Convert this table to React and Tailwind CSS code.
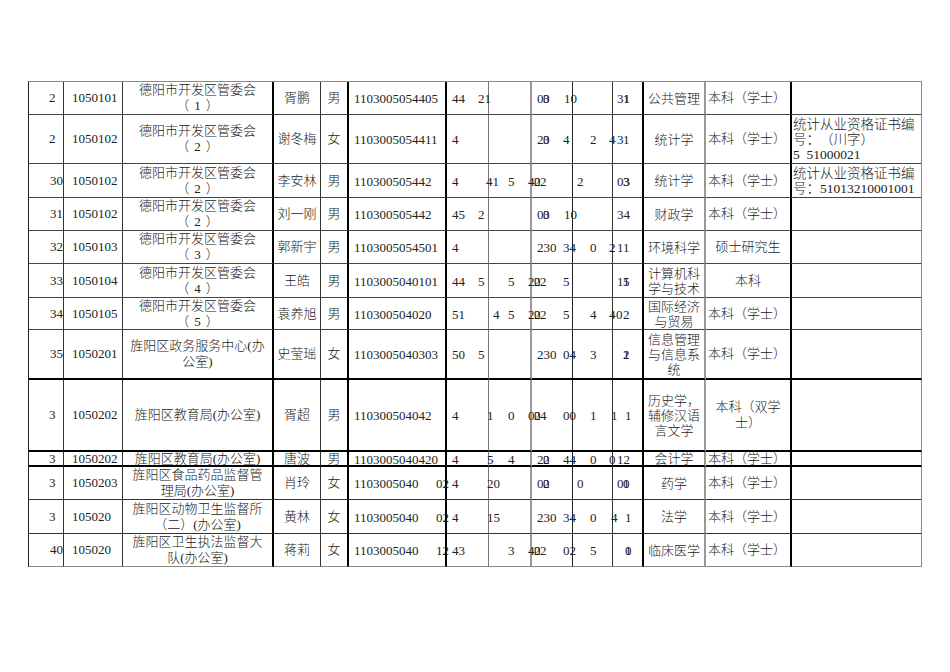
import React from 'react';

const COLS = [36, 59, 151, 47, 28, 98, 42, 43, 41, 40, 31, 62, 86, 130];
const STARTS = COLS.reduce((acc, w) => [...acc, acc[acc.length - 1] + w], [28]);

// right border of every column
const COL_BORDER = [
  'border-r border-r-[#333]',
  'border-r border-r-[#333]',
  'border-r-2 border-r-black',
  'border-r border-r-[#333]',
  'border-r-2 border-r-black',
  'border-r-2 border-r-black',
  'border-r border-r-[#777]',
  'border-r-2 border-r-[#999]',
  'border-r border-r-[#222]',
  'border-r border-r-[#333]',
  'border-r-2 border-r-black',
  'border-r-2 border-r-[#999]',
  'border-r-2 border-r-black',
  'border-r border-r-[#888]',
];

// bottom border of every row
const ROW_BORDER = [
  'border-b border-b-[#444]',
  'border-b border-b-[#444]',
  'border-b border-b-[#444]',
  'border-b border-b-[#444]',
  'border-b border-b-[#444]',
  'border-b border-b-[#444]',
  'border-b border-b-[#444]',
  'border-b-2 border-b-black',
  'border-b-2 border-b-black',
  'border-b-2 border-b-black',
  'border-b border-b-[#333]',
  'border-b border-b-[#333]',
  'border-b border-b-[#888]',
];

const rows = [
  {
    no: '2', code: '1050101', unit: ['德阳市开发区管委会', '（1）'], name: '胥鹏', sex: '男',
    nums: [[354, '1103005054405'], [452, '44'], [478, '21'], [537, '0'], [543, '0'], [543, '3'], [564, '10'], [617, '3'], [623, '1'], [623.6, '1']],
    major: ['公共管理'], degree: ['本科（学士）'], degLeft: true, note: [],
  },
  {
    no: '2', code: '1050102', unit: ['德阳市开发区管委会', '（2）'], name: '谢冬梅', sex: '女',
    nums: [[354, '1103005054411'], [452, '4'], [537, '2'], [543, '0'], [543, '3'], [563, '4'], [590, '2'], [609, '4'], [617, '3'], [623, '1']],
    major: ['统计学'], degree: ['本科（学士）'], degLeft: true,
    note: ['统计从业资格证书编', '号：（川字）', '5  51000021'],
  },
  {
    no: '30', code: '1050102', unit: ['德阳市开发区管委会', '（2）'], name: '李安林', sex: '男',
    nums: [[354, '110300505442'], [452, '4'], [486, '41'], [508, '5'], [528, '4'], [534, '0'], [534, '2'], [540, '2'], [577, '2'], [617, '0'], [623, '3'], [623.6, '3']],
    major: ['统计学'], degree: ['本科（学士）'], degLeft: true,
    note: ['统计从业资格证书编', '号：51013210001001'],
  },
  {
    no: '31', code: '1050102', unit: ['德阳市开发区管委会', '（2）'], name: '刘一刚', sex: '男',
    nums: [[354, '110300505442'], [452, '45'], [478, '2'], [537, '0'], [543, '0'], [543, '3'], [564, '10'], [617, '34']],
    major: ['财政学'], degree: ['本科（学士）'], degLeft: true, note: [],
  },
  {
    no: '32', code: '1050103', unit: ['德阳市开发区管委会', '（3）'], name: '郭新宇', sex: '男',
    nums: [[354, '1103005054501'], [452, '4'], [537, '230'], [563, '34'], [590, '0'], [609, '2'], [617, '1'], [623, '1']],
    major: ['环境科学'], degree: ['硕士研究生'], degLeft: false, note: [],
  },
  {
    no: '33', code: '1050104', unit: ['德阳市开发区管委会', '（4）'], name: '王皓', sex: '男',
    nums: [[354, '1103005040101'], [452, '44'], [478, '5'], [508, '5'], [528, '2'], [534, '0'], [534, '2'], [540, '2'], [563, '5'], [617, '1'], [623, '5'], [623, '1']],
    major: ['计算机科', '学与技术'], degree: ['本科'], degLeft: false, note: [],
  },
  {
    no: '34', code: '1050105', unit: ['德阳市开发区管委会', '（5）'], name: '袁养旭', sex: '男',
    nums: [[354, '110300504020'], [452, '51'], [493, '4'], [508, '5'], [528, '2'], [534, '0'], [534, '2'], [540, '2'], [563, '5'], [590, '4'], [609, '4'], [616, '0'], [623, '2']],
    major: ['国际经济', '与贸易'], degree: ['本科（学士）'], degLeft: true, note: [],
  },
  {
    no: '35', code: '1050201', unit: ['旌阳区政务服务中心(办', '公室)'], name: '史莹瑶', sex: '女',
    nums: [[354, '1103005040303'], [452, '50'], [478, '5'], [537, '230'], [563, '04'], [590, '3'], [623, '2'], [623, '1']],
    major: ['信息管理', '与信息系', '统'], degree: ['本科（学士）'], degLeft: true, note: [],
  },
  {
    no: '3', code: '1050202', unit: ['旌阳区教育局(办公室)'], name: '胥超', sex: '男',
    nums: [[354, '110300504042'], [452, '4'], [487, '1'], [508, '0'], [528, '0'], [534, '0'], [534, '2'], [540, '4'], [563, '00'], [590, '1'], [611, '1'], [625, '1']],
    major: ['历史学，', '辅修汉语', '言文学'], degree: ['本科（双学', '士）'], degLeft: false, note: [],
  },
  {
    no: '3', code: '1050202', unit: ['旌阳区教育局(办公室)'], name: '唐波', sex: '男',
    nums: [[354, '1103005040420'], [452, '4'], [487, '5'], [508, '4'], [537, '2'], [543, '0'], [543, '2'], [563, '44'], [590, '0'], [609, '0'], [617, '12']],
    major: ['会计学'], degree: ['本科（学士）'], degLeft: true, note: [],
  },
  {
    no: '3', code: '1050203', unit: ['旌阳区食品药品监督管', '理局(办公室)'], name: '肖玲', sex: '女',
    nums: [[354, '1103005040'], [436, '02'], [452, '4'], [487, '20'], [537, '0'], [543, '0'], [543, '2'], [577, '0'], [617, '0'], [623, '0'], [623, '1']],
    major: ['药学'], degree: ['本科（学士）'], degLeft: true, note: [],
  },
  {
    no: '3', code: '105020', unit: ['旌阳区动物卫生监督所', '（二）(办公室)'], name: '黄林', sex: '女',
    nums: [[354, '1103005040'], [436, '02'], [452, '4'], [487, '15'], [537, '230'], [563, '34'], [590, '0'], [611, '4'], [625, '1']],
    major: ['法学'], degree: ['本科（学士）'], degLeft: true, note: [],
  },
  {
    no: '40', code: '105020', unit: ['旌阳区卫生执法监督大', '队(办公室)'], name: '蒋莉', sex: '女',
    nums: [[354, '1103005040'], [436, '12'], [452, '43'], [508, '3'], [528, '4'], [534, '0'], [534, '2'], [540, '2'], [563, '02'], [590, '5'], [625, '0'], [625, '1']],
    major: ['临床医学'], degree: ['本科（学士）'], degLeft: true, note: [],
  },
];

function Lines({ lines }) {
  return lines.map((l, i) => (
    <div key={i} className="whitespace-pre">{l}</div>
  ));
}

function UnitLines({ lines }) {
  return lines.map((l, i) => (
    <div key={i} className={/^（\d）$/.test(l) ? 'whitespace-pre tracking-[5px] pl-[5px]' : 'whitespace-pre'}>
      {l}
    </div>
  ));
}

function Row({ row, r }) {
  const base = `${ROW_BORDER[r]} overflow-visible`;
  const cell = (c) => `${base} ${COL_BORDER[c]}`;
  const numCells = [5, 6, 7, 8, 9, 10].map((c) => {
    const start = STARTS[c];
    const end = STARTS[c + 1];
    const items = row.nums.filter(([x]) => x >= start && x < end);
    return (
      <div key={c} className={`${cell(c)} relative`}>
        {items.map(([x, t], i) => (
          <span
            key={i}
            className="absolute top-1/2 -translate-y-1/2 whitespace-pre leading-[15px]"
            style={{ left: x - start }}
          >
            {t}
          </span>
        ))}
      </div>
    );
  });

  return (
    <>
      <div className={`${cell(0)} flex items-center ${row.no.length > 1 ? 'pl-[21px]' : 'pl-[20px]'}`}>{row.no}</div>
      <div className={`${cell(1)} flex items-center pl-[8px]`}>{row.code}</div>
      <div className={`${cell(2)} flex flex-col justify-center items-center text-center leading-[16px]`}>
        <UnitLines lines={row.unit} />
      </div>
      <div className={`${cell(3)} flex items-center justify-center whitespace-nowrap`}>{row.name}</div>
      <div className={`${cell(4)} flex items-center justify-center`}>{row.sex}</div>
      {numCells}
      <div className={`${cell(11)} flex flex-col justify-center items-center text-center leading-[15px]`}>
        <Lines lines={row.major} />
      </div>
      <div className={`${cell(12)} flex flex-col justify-center leading-[16px] ${row.degLeft ? 'items-start pl-[2px]' : 'items-center'}`}>
        <Lines lines={row.degree} />
      </div>
      <div className={`${cell(13)} flex flex-col justify-center pl-[1px] text-[13.5px] leading-[15px]`}>
        <Lines lines={row.note} />
      </div>
    </>
  );
}

export default function App() {
  return (
    <div className="w-[950px] h-[672px] bg-white pt-[81px] pl-[28px] font-['Liberation_Serif','Noto_Sans_CJK_SC',serif] text-[13px] text-[#222] font-light [text-spacing-trim:space-all]">
      <div className="grid w-max border-l border-l-[#222] border-t border-t-[#888] grid-cols-[35px_59px_151px_47px_28px_98px_42px_43px_41px_40px_31px_62px_86px_130px] grid-rows-[33px_49px_34px_33px_33px_34px_32px_50px_72px_15px_33px_34px_33px]">
        {rows.map((row, r) => (
          <Row key={r} row={row} r={r} />
        ))}
      </div>
    </div>
  );
}
